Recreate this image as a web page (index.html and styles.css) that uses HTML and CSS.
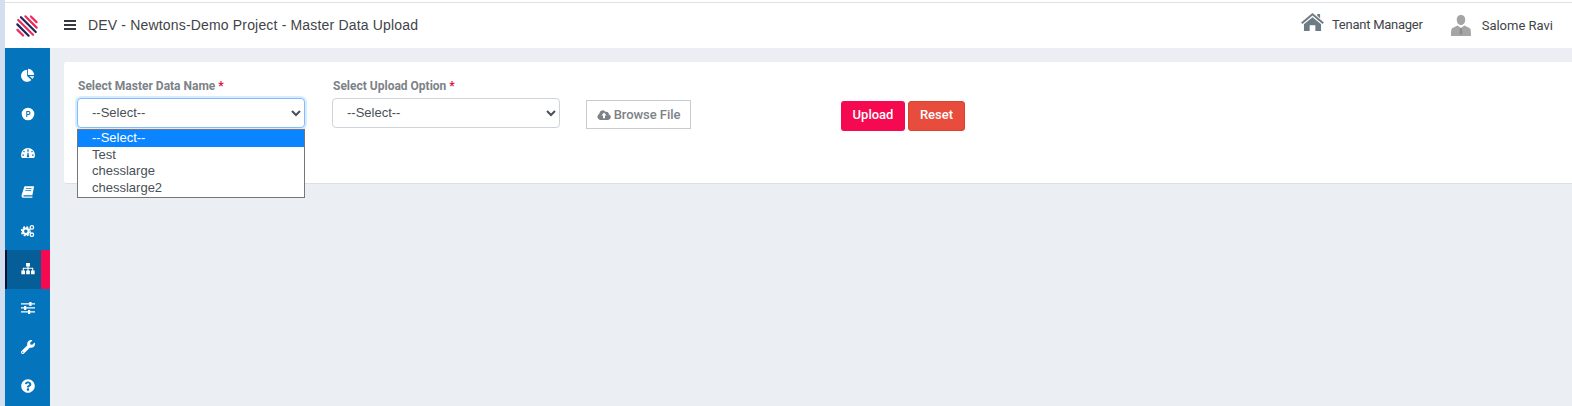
FILE: index.html
```html
<!DOCTYPE html>
<html lang="en">
<head>
    <meta charset="UTF-8">
    <meta name="viewport" content="width=device-width, initial-scale=1.0">
    <title>Master Data Upload</title>
    <link rel="stylesheet" href="styles.css">
</head>
<body>
    <div class="app">
        <header class="topbar">
            <svg class="logo" viewBox="0 0 24 24">
                <g transform="rotate(45 12 12)" stroke-width="2.2" stroke-linecap="round">
                    <line x1="8" y1="2.5" x2="16" y2="2.5" stroke="#ee2a5e"/>
                    <line x1="4" y1="6.3" x2="20" y2="6.3" stroke="#ee2a5e"/>
                    <line x1="1.5" y1="10.1" x2="22.5" y2="10.1" stroke="#1d2b5c"/>
                    <line x1="1.5" y1="13.9" x2="22.5" y2="13.9" stroke="#ee2a5e"/>
                    <line x1="4" y1="17.7" x2="20" y2="17.7" stroke="#1d2b5c"/>
                    <line x1="8" y1="21.5" x2="16" y2="21.5" stroke="#ee2a5e"/>
                </g>
            </svg>
            <div class="hamburger"><span></span><span></span><span></span></div>
            <div class="page-title">DEV - Newtons-Demo Project - Master Data Upload</div>
            <div class="top-right">
                <div class="top-link tenant">
                    <svg class="home-icon" viewBox="0 0 24 20">
                        <path fill="#6d7b84" d="M12 1 L24 11 L22.6 12.6 L12 3.8 L1.4 12.6 L0 11 Z M17 2 H20 V6.5 L17 4 Z M12 5.6 L21 13 V20 H15 V14 H9 V20 H3 V13 Z"/>
                    </svg>
                    <span>Tenant Manager</span>
                </div>
                <div class="top-link user">
                    <svg class="user-icon" viewBox="0 0 20 21">
                        <path fill="#a5a5a5" d="M10 0 C13 0 14.4 2.2 14.2 5 C14.1 7.4 12.8 10 10 10 C7.2 10 5.9 7.4 5.8 5 C5.6 2.2 7 0 10 0 Z M6.6 10.6 L10 13 L13.4 10.6 L18.5 13 C19.6 13.6 20 15 20 21 H0 C0 15 .4 13.6 1.5 13 Z"/>
                        <path fill="#8c8c8c" d="M9.2 13 H10.8 L11.4 18 L10 20 L8.6 18 Z"/>
                    </svg>
                    <span>Salome Ravi</span>
                </div>
            </div>
        </header>

        <div class="body-row">
            <nav class="sidebar">
                <a class="nav-item">
                    <svg viewBox="0 0 16 16"><path d="M7 2 V9 L11.8 13.8 A6.9 6.9 0 1 1 7 2 Z"/><path d="M8 1 A6.9 6.9 0 0 1 15 8 H8 Z"/><path d="M9.6 9 H15 A6.9 6.9 0 0 1 13 12.6 Z" opacity="0.85"/></svg>
                </a>
                <a class="nav-item">
                    <svg viewBox="0 0 16 16"><path fill-rule="evenodd" d="M8 .8 a7.2 7.2 0 1 0 0 14.4 a7.2 7.2 0 0 0 0-14.4 Z M6 4.6 H8.6 A2.3 2.3 0 0 1 8.6 9.2 H7.2 V11.4 H6 Z M7.2 5.8 V8 H8.5 A1.1 1.1 0 0 0 8.5 5.8 Z"/></svg>
                </a>
                <a class="nav-item">
                    <svg viewBox="0 0 18 16"><path fill-rule="evenodd" d="M9 1.5 A9 9 0 0 0 0 10.5 C0 12 .4 13.2 1 14.2 C1.2 14.5 1.5 14.5 1.8 14.5 H16.2 C16.5 14.5 16.8 14.5 17 14.2 C17.6 13.2 18 12 18 10.5 A9 9 0 0 0 9 1.5 Z M8.2 3.2 H9.8 V6.4 H8.2 Z M3.6 5 L5 6.2 L4 7.4 L2.6 6.2 Z M14.4 5 L15.4 6.2 L14 7.4 L13 6.2 Z M8.3 7.6 H9.7 L10 10.8 A1.6 1.6 0 1 1 8 10.8 Z M1.8 10 H4 V11.4 H1.8 Z M14 10 H16.2 V11.4 H14 Z"/></svg>
                </a>
                <a class="nav-item">
                    <svg viewBox="0 0 16 16"><path fill-rule="evenodd" d="M4 1.5 H15 L13 11.6 H3.4 C2.6 11.6 2.4 13 3.2 13 H13.2 L12.9 14.5 H2.4 C.8 14.5 .4 13 .8 11.2 Z M5.6 3.8 L5.4 4.6 H12 L12.2 3.8 Z M5.1 6 L4.9 6.8 H11.5 L11.7 6 Z"/></svg>
                </a>
                <a class="nav-item">
                    <svg viewBox="0 0 18 16">
                        <circle cx="6.2" cy="8.4" r="3.6" fill="none" stroke="#fff" stroke-width="2.8"/>
                        <circle cx="6.2" cy="8.4" r="5.6" fill="none" stroke="#fff" stroke-width="1.8" stroke-dasharray="2.6 1.8"/>
                        <circle cx="14" cy="3.4" r="2.2" fill="none" stroke="#fff" stroke-width="1.7"/>
                        <circle cx="14" cy="12.8" r="2.2" fill="none" stroke="#fff" stroke-width="1.7"/>
                    </svg>
                </a>
                <a class="nav-item active">
                    <svg viewBox="0 0 16 14"><path d="M5.8 0 H10.2 V4 H8.6 V5.6 H14 V8.6 H15.6 V13 H11.4 V8.6 H12.8 V6.8 H8.6 V8.6 H10.1 V13 H5.9 V8.6 H7.4 V6.8 H3.2 V8.6 H4.6 V13 H.4 V8.6 H2 V5.6 H7.4 V4 H5.8 Z"/></svg>
                </a>
                <a class="nav-item">
                    <svg viewBox="0 0 16 14"><path d="M0 1.6 H16 V3 H0 Z M0 6.2 H16 V7.6 H0 Z M0 10.8 H16 V12.2 H0 Z"/><path d="M9.5 0 H12 V4.6 H9.5 Z M3.5 4.6 H6 V9.2 H3.5 Z M8 9.2 H10.5 V13.8 H8 Z"/></svg>
                </a>
                <a class="nav-item">
                    <svg viewBox="0 0 512 512"><path d="M507.73 109.1c-2.24-9.03-13.54-12.09-20.12-5.51l-74.36 74.36-67.88-11.31-11.31-67.88 74.36-74.36c6.62-6.62 3.43-17.9-5.66-20.16-47.38-11.74-99.55.91-136.58 37.93-39.64 39.64-50.55 97.1-34.05 147.2L18.74 402.76c-24.99 24.99-24.99 65.51 0 90.5 24.99 24.99 65.51 24.99 90.5 0l213.21-213.21c50.12 16.71 107.47 5.68 147.37-34.22 37.07-37.07 49.7-89.32 37.91-136.73zM64 472c-13.25 0-24-10.75-24-24 0-13.26 10.75-24 24-24s24 10.74 24 24c0 13.25-10.75 24-24 24z"/></svg>
                </a>
                <a class="nav-item">
                    <svg viewBox="0 0 512 512"><path d="M504 256c0 136.997-111.043 248-248 248S8 392.997 8 256C8 119.083 119.043 8 256 8s248 111.083 248 248zM262.655 90c-54.497 0-89.255 22.957-116.549 63.758-3.536 5.286-2.353 12.415 2.715 16.258l34.699 26.31c5.205 3.947 12.621 3.008 16.665-2.122 17.864-22.658 30.113-35.797 57.303-35.797 20.429 0 45.698 13.148 45.698 32.958 0 14.976-12.363 22.667-32.534 33.976C247.128 238.528 216 254.941 216 296v4c0 6.627 5.373 12 12 12h56c6.627 0 12-5.373 12-12v-1.333c0-28.462 83.186-29.647 83.186-106.667 0-58.002-60.165-102-116.531-102zM256 338c-25.365 0-46 20.635-46 46 0 25.364 20.635 46 46 46s46-20.636 46-46c0-25.365-20.635-46-46-46z"/></svg>
                </a>
            </nav>

            <main class="content">
                <section class="card">
                    <div class="field master-field">
                        <label class="field-label">Select Master Data Name <span class="req">*</span></label>
                        <select class="form-select focused"><option>--Select--</option></select>
                        <ul class="dropdown">
                            <li class="selected">--Select--</li>
                            <li>Test</li>
                            <li>chesslarge</li>
                            <li>chesslarge2</li>
                        </ul>
                    </div>
                    <div class="field upload-field">
                        <label class="field-label">Select Upload Option <span class="req">*</span></label>
                        <select class="form-select"><option>--Select--</option></select>
                    </div>
                    <button class="browse-btn">
                        <svg viewBox="0 0 20 14"><path fill-rule="evenodd" d="M16.6 6.1 A3 3 0 0 0 12.4 2.6 A5 5 0 0 0 3.3 5 V5.6 A4.4 4.4 0 0 0 4.5 14 H16 A4 4 0 0 0 16.6 6.1 Z M10 3.6 L13.6 7.8 H11.4 V11.6 H8.6 V7.8 H6.4 Z"/></svg>
                        Browse File
                    </button>
                    <div class="actions">
                        <button class="btn btn-upload">Upload</button>
                        <button class="btn btn-reset">Reset</button>
                    </div>
                </section>
            </main>
        </div>
    </div>
</body>
</html>
```

FILE: styles.css
```css
* {
    box-sizing: border-box;
}
html, body {
    height: 100%;
    margin: 0;
}
body {
    font-family: Roboto, "Liberation Sans", sans-serif;
    background: #d3deee;
    overflow: hidden;
}
.app {
    margin-left: 5px;
    height: 100%;
    display: flex;
    flex-direction: column;
    background: #ebeef3;
}
.topbar {
    height: 48px;
    flex: none;
    display: flex;
    align-items: center;
    background: #fff;
    border-top: 2px solid #fff;
    box-shadow: inset 0 1px 0 #dfe1e6;
    padding-left: 10px;
}
.logo {
    width: 24px;
    height: 24px;
    margin-top: 2px;
}
.hamburger {
    width: 12px;
    margin-left: 25px;
    display: flex;
    flex-direction: column;
    gap: 2px;
}
.hamburger span {
    height: 2px;
    background: #343a40;
}
.page-title {
    margin-left: 12px;
    font-family: "Liberation Sans", sans-serif;
    font-size: 14px;
    letter-spacing: 0.17px;
    color: #3f4449;
}
.top-right {
    margin-left: auto;
    display: flex;
    align-items: center;
    padding-right: 19px;
    font-size: 13px;
    color: #3f4449;
}
.top-link {
    display: flex;
    align-items: center;
}
.home-icon {
    width: 23px;
    height: 19px;
    margin: -7px 8px 0 0;
}
.tenant span {
    margin-top: -1px;
    letter-spacing: -0.25px;
}
.user {
    margin-left: 28px;
}
.user-icon {
    width: 20px;
    height: 21px;
    margin-right: 11px;
}
.body-row {
    flex: 1;
    display: flex;
    min-height: 0;
}
.sidebar {
    width: 45px;
    flex: none;
    padding-top: 8px;
    background: #0474bc;
}
.nav-item {
    height: 38.8px;
    display: flex;
    align-items: center;
    justify-content: center;
}
.nav-item svg {
    width: 14px;
    height: 14px;
    fill: #fff;
}
.nav-item.active {
    background: #055e98;
    border-left: 2px solid #04142e;
    border-right: 9px solid #f50a52;
}
.nav-item.active svg {
    margin-left: 7px;
}
.content {
    flex: 1;
    padding: 14px 0 0 14px;
}
.card {
    height: 122px;
    background: #fff;
    border-bottom: 1px solid #dcdfe4;
    border-radius: 3px 0 0 3px;
    padding: 16px 14px 0;
    display: flex;
    align-items: flex-start;
}
.field {
    width: 227px;
    position: relative;
}
.master-field {
    margin-right: 28px;
}
.upload-field {
    margin-right: 26px;
}
.field-label {
    display: block;
    font-size: 12px;
    font-weight: 700;
    color: #7c8288;
    line-height: 16px;
    margin-bottom: 4px;
}
.req {
    color: #e0103c;
}
.form-select {
    display: block;
    width: calc(100% + 1px);
    height: 30px;
    margin-left: -1px;
    font-family: "Liberation Sans", sans-serif;
    font-size: 13px;
    color: #495057;
    background: #fff;
    border: 1px solid #ced4da;
    border-radius: 4px;
    padding: 0 0 2px 10px;
    outline: none;
}
.form-select.focused {
    border-color: #80bdff;
    box-shadow: 0 0 0 2px rgba(0, 123, 255, 0.15);
}
.dropdown {
    position: absolute;
    top: 51px;
    left: -1px;
    width: calc(100% + 1px);
    margin: 0;
    padding: 0 0 1px;
    list-style: none;
    background: #fff;
    border: 1px solid #767676;
    font-family: "Liberation Sans", sans-serif;
    font-size: 13px;
    line-height: 16.5px;
    color: #495057;
    z-index: 2;
}
.dropdown li {
    padding-left: 14px;
}
.dropdown li.selected {
    background: #0a84ff;
    color: #fff;
}
.browse-btn {
    width: 105px;
    height: 29px;
    margin-top: 22px;
    background: #fff;
    border: 1px solid #c8ccd0;
    font-family: inherit;
    font-size: 13px;
    font-weight: 500;
    letter-spacing: -0.05px;
    color: #7c8288;
    display: flex;
    align-items: center;
    justify-content: center;
    gap: 3px;
    padding: 0;
}
.browse-btn svg {
    width: 14px;
    height: 10px;
    fill: #7c8288;
}
.actions {
    margin-left: 150px;
    margin-top: 23px;
    display: flex;
    gap: 3px;
}
.btn {
    height: 30px;
    border: none;
    border-radius: 3px;
    color: #fff;
    font-family: inherit;
    font-size: 13px;
    font-weight: 500;
    padding: 0 0 3px;
}
.btn-upload {
    width: 64px;
    background: #f50a52;
}
.btn-reset {
    width: 57px;
    background: #e74c3c;
    border: 1px solid #d8432f;
}
```
